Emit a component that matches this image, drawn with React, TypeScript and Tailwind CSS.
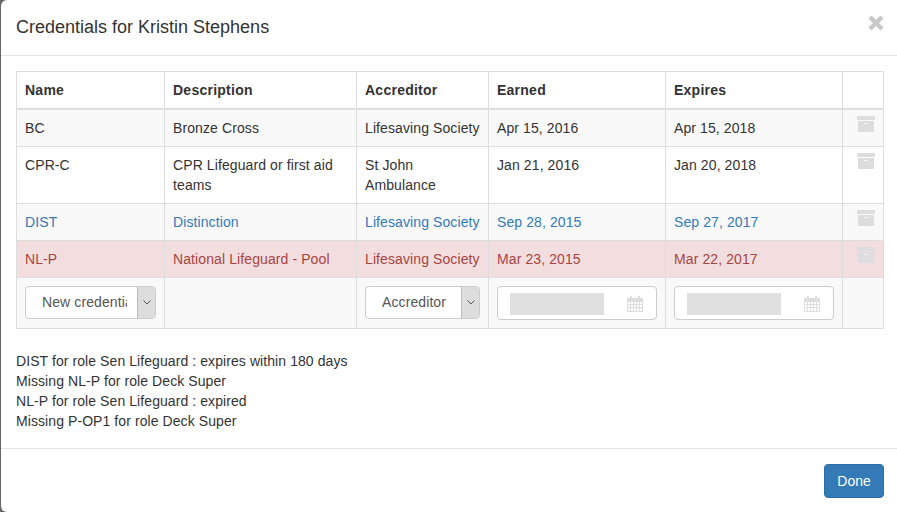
import React from "react";

const rows = [
  { name: "BC", desc: "Bronze Cross", acc: "Lifesaving Society", earned: "Apr 15, 2016", expires: "Apr 15, 2018", cls: "bg-[#f9f9f9] text-[#333333]" },
  { name: "CPR-C", desc: "CPR Lifeguard or first aid teams", acc: "St John Ambulance", earned: "Jan 21, 2016", expires: "Jan 20, 2018", cls: "bg-white text-[#333333]" },
  { name: "DIST", desc: "Distinction", acc: "Lifesaving Society", earned: "Sep 28, 2015", expires: "Sep 27, 2017", cls: "bg-[#f9f9f9] text-[#337ab7]" },
  { name: "NL-P", desc: "National Lifeguard - Pool", acc: "Lifesaving Society", earned: "Mar 23, 2015", expires: "Mar 22, 2017", cls: "bg-[#f2dede] text-[#a94442]" },
];

const messages = [
  "DIST for role Sen Lifeguard : expires within 180 days",
  "Missing NL-P for role Deck Super",
  "NL-P for role Sen Lifeguard : expired",
  "Missing P-OP1 for role Deck Super",
];

function ArchiveIcon() {
  return (
    <svg width="18" height="16" viewBox="0 0 18 16" className="ml-[6px] -mt-[2px] block" fill="#dddddd">
      <rect x="0" y="0" width="18" height="4" />
      <path d="M1 5h16v10a1 1 0 0 1-1 1H2a1 1 0 0 1-1-1z" />
      <rect x="7" y="7" width="4" height="1" fill="#f5f5f5" />
    </svg>
  );
}

function CalendarIcon() {
  return (
    <svg width="16" height="17" viewBox="0 0 16 17" fill="#dddddd">
      <path
        fillRule="evenodd"
        d="M1 3h2V1.5a1 1 0 0 1 2 0V3h6V1.5a1 1 0 0 1 2 0V3h2a1 1 0 0 1 1 1v12a1 1 0 0 1-1 1H1a1 1 0 0 1-1-1V4a1 1 0 0 1 1-1zM1 7v2h2V7zm3 0v2h2V7zm3 0v2h2V7zm3 0v2h2V7zm3 0v2h2V7zM1 10v2h2v-2zm3 0v2h2v-2zm3 0v2h2v-2zm3 0v2h2v-2zm3 0v2h2v-2zM1 13v3h2v-3zm3 0v3h2v-3zm3 0v3h2v-3zm3 0v3h2v-3zm3 0v3h2v-3z"
      />
    </svg>
  );
}

function SelectBox({ label, width }: { label: string; width: string }) {
  return (
    <div className={`flex h-[33px] ${width} overflow-hidden rounded-[4px] border border-[#cccccc] bg-white`}>
      <div className="flex-1 overflow-hidden whitespace-nowrap pl-4 pr-[10px] leading-[30px]">
        <span className="block overflow-hidden tracking-[0.1px] text-[#555555]">{label}</span>
      </div>
      <div className="flex w-[18px] shrink-0 items-center justify-center border-l border-[#bbbbbb] bg-[#dddddd]">
        <svg width="8" height="5" viewBox="0 0 8 5" fill="none" stroke="#555555" strokeWidth="1">
          <path d="M.5.5L4 4 7.5.5" />
        </svg>
      </div>
    </div>
  );
}

function DateBox() {
  return (
    <div className="flex h-[34px] w-[160px] items-center rounded-[4px] border border-[#cccccc] bg-white pl-3 pr-[13px]">
      <div className="mt-[2px] h-[22px] w-[94px] bg-[#e0e0e0]" />
      <div className="ml-auto">
        <CalendarIcon />
      </div>
    </div>
  );
}

const cell = "border border-[#dddddd] p-2 align-top tracking-[0.1px]";

export default function App() {
  return (
    <div
      className="h-[512px] w-[897px] overflow-hidden bg-[#666666] text-[14px] leading-5 text-[#333333]"
      style={{ fontFamily: '"Liberation Sans", Arial, sans-serif' }}
    >
      <div className="ml-[1px] h-[512px] rounded-l-[6px] bg-white">
        <div className="flex h-[56px] items-start justify-between border-b border-[#e5e5e5] pl-[15px] pr-[13px] pt-[14px]">
          <h4 className="text-[18px] leading-[26px]">Credentials for Kristin Stephens</h4>
          <svg width="16" height="16" viewBox="0 0 16 16" className="mt-[1px]" fill="none" stroke="#c8c8c8" strokeWidth="4.5">
            <path d="M2 2l12 12M14 2L2 14" />
          </svg>
        </div>

        <div className="h-[392px] px-[15px] pt-[15px]">
          <table className="w-[867px] table-fixed border-collapse">
            <colgroup>
              <col className="w-[148px]" />
              <col className="w-[192px]" />
              <col className="w-[132px]" />
              <col className="w-[177px]" />
              <col className="w-[177px]" />
              <col className="w-[41px]" />
            </colgroup>
            <thead>
              <tr>
                {["Name", "Description", "Accreditor", "Earned", "Expires", ""].map((h) => (
                  <th key={h} className="border border-b-2 border-[#dddddd] p-2 text-left align-bottom font-bold tracking-[0.25px]">
                    {h}
                    {h === "" && <span>&nbsp;</span>}
                  </th>
                ))}
              </tr>
            </thead>
            <tbody>
              {rows.map((r) => (
                <tr key={r.name} className={r.cls}>
                  <td className={cell}>{r.name}</td>
                  <td className={cell}>{r.desc}</td>
                  <td className={cell}>{r.acc}</td>
                  <td className={cell}>{r.earned}</td>
                  <td className={cell}>{r.expires}</td>
                  <td className={cell}>
                    <ArchiveIcon />
                  </td>
                </tr>
              ))}
              <tr className="bg-[#f9f9f9]">
                <td className={cell}>
                  <SelectBox label="New credential" width="w-[131px]" />
                </td>
                <td className={cell} />
                <td className={cell}>
                  <SelectBox label="Accreditor" width="w-[115px]" />
                </td>
                <td className={cell}>
                  <DateBox />
                </td>
                <td className={cell}>
                  <DateBox />
                </td>
                <td className={cell} />
              </tr>
            </tbody>
          </table>

          <div className="mt-[22px] tracking-[0.08px]">
            {messages.map((m) => (
              <div key={m}>{m}</div>
            ))}
          </div>
        </div>

        <div className="flex justify-end border-t border-[#e5e5e5] pr-[13px] pt-[15px]">
          <button className="h-[34px] w-[60px] rounded-[4px] border border-[#2e6da4] bg-[#337ab7] text-white">
            Done
          </button>
        </div>
      </div>
    </div>
  );
}
